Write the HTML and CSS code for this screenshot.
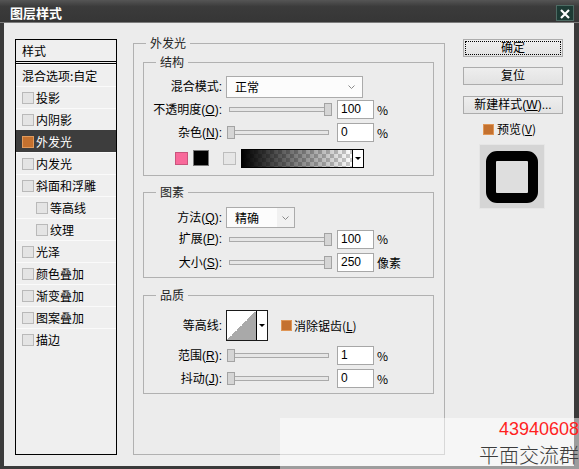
FILE: index.html
```html
<!DOCTYPE html>
<html lang="zh-CN">
<head>
<meta charset="utf-8">
<title>图层样式</title>
<link rel="stylesheet" href="styles.css">
</head>
<body>
<div class="window">
  <div class="titlebar">
    <span class="title">图层样式</span>
    <span class="close"><svg width="18" height="16" viewBox="0 0 18 16"><path d="M4.5 3.5 L13.5 12.5 M13.5 3.5 L4.5 12.5" stroke="#fff" stroke-width="2.4" fill="none"/></svg></span>
  </div>
  <div class="body">
    <div class="stylelist">
      <div class="list-head">样式</div>
      <div class="list-row">混合选项:自定</div>
      <div class="list-row"><span class="cb"></span>投影</div>
      <div class="list-row"><span class="cb"></span>内阴影</div>
      <div class="list-row selected"><span class="cb on"></span>外发光</div>
      <div class="list-row"><span class="cb"></span>内发光</div>
      <div class="list-row"><span class="cb"></span>斜面和浮雕</div>
      <div class="list-row sub"><span class="cb"></span>等高线</div>
      <div class="list-row sub"><span class="cb"></span>纹理</div>
      <div class="list-row"><span class="cb"></span>光泽</div>
      <div class="list-row"><span class="cb"></span>颜色叠加</div>
      <div class="list-row"><span class="cb"></span>渐变叠加</div>
      <div class="list-row"><span class="cb"></span>图案叠加</div>
      <div class="list-row"><span class="cb"></span>描边</div>
    </div>

    <fieldset class="outer">
      <legend>外发光</legend>

      <fieldset class="group g-struct">
        <legend>结构</legend>
        <div class="row r-first">
          <span class="lbl">混合模式:</span>
          <div class="select w-blend"><span>正常</span><span class="chev"><svg width="7" height="4" viewBox="0 0 7 4"><path d="M0.5 0.5 L3.5 3.5 L6.5 0.5" stroke="#8a8a8a" fill="none"/></svg></span></div>
        </div>
        <div class="row r-slider">
          <span class="lbl">不透明度(<u>O</u>):</span>
          <div class="slider"><div class="track"></div><div class="thumb max"></div></div>
          <div class="num">100</div><span class="unit">%</span>
        </div>
        <div class="row r-slider">
          <span class="lbl">杂色(<u>N</u>):</span>
          <div class="slider"><div class="track"></div><div class="thumb min"></div></div>
          <div class="num">0</div><span class="unit">%</span>
        </div>
        <div class="row r-colors">
          <span class="sw-pink"></span>
          <span class="sw-black"></span>
          <span class="sw-grey"></span>
          <div class="grad"><div class="grad-fill"></div><div class="drop-arrow"><span class="tri"></span></div></div>
        </div>
      </fieldset>

      <fieldset class="group g-elem">
        <legend>图素</legend>
        <div class="row r-method">
          <span class="lbl">方法(<u>Q</u>):</span>
          <div class="select w-method"><span class="sel-text">精确</span><span class="chev split"><svg width="7" height="4" viewBox="0 0 7 4"><path d="M0.5 0.5 L3.5 3.5 L6.5 0.5" stroke="#8a8a8a" fill="none"/></svg></span></div>
        </div>
        <div class="row r-slider">
          <span class="lbl">扩展(<u>P</u>):</span>
          <div class="slider"><div class="track"></div><div class="thumb max"></div></div>
          <div class="num">100</div><span class="unit">%</span>
        </div>
        <div class="row r-slider r-gap1">
          <span class="lbl">大小(<u>S</u>):</span>
          <div class="slider"><div class="track"></div><div class="thumb max"></div></div>
          <div class="num">250</div><span class="unit">像素</span>
        </div>
      </fieldset>

      <fieldset class="group g-quality">
        <legend>品质</legend>
        <div class="row r-contour">
          <span class="lbl">等高线:</span>
          <div class="contour"><div class="contour-img"></div><div class="drop-arrow"><span class="tri"></span></div></div>
          <span class="cb-orange"></span><span class="cb-label">消除锯齿(<u>L</u>)</span>
        </div>
        <div class="row r-slider r-gap3">
          <span class="lbl">范围(<u>R</u>):</span>
          <div class="slider"><div class="track"></div><div class="thumb min"></div></div>
          <div class="num">1</div><span class="unit">%</span>
        </div>
        <div class="row r-slider">
          <span class="lbl">抖动(<u>J</u>):</span>
          <div class="slider"><div class="track"></div><div class="thumb min"></div></div>
          <div class="num">0</div><span class="unit">%</span>
        </div>
      </fieldset>
    </fieldset>

    <div class="side">
      <div class="btn default"><span>确定</span></div>
      <div class="btn b2">复位</div>
      <div class="btn b3">新建样式(<u>W</u>)...</div>
      <div class="preview-check"><span class="cb-orange small"></span><span>预览(<u>V</u>)</span></div>
      <div class="preview"><div class="preview-shape"></div></div>
    </div>
  </div>

  <div class="watermark">
    <div class="wm-num">43940608</div>
    <div class="wm-cn">平面交流群</div>
  </div>
</div>
</body>
</html>
```

FILE: styles.css
```css
* { box-sizing: border-box; }

html, body {
  margin: 0;
  padding: 0;
}

body {
  width: 579px;
  height: 469px;
  overflow: hidden;
  background: #343434;
  font-family: "Liberation Sans", "Noto Sans CJK SC", sans-serif;
  font-size: 12px;
  line-height: 14px;
  color: #000;
}

.window {
  position: relative;
  width: 579px;
  height: 469px;
  display: flex;
  flex-direction: column;
  background: #3a3a3a;
  overflow: hidden;
}

/* ---------- title bar ---------- */
.titlebar {
  height: 23px;
  flex-shrink: 0;
  display: flex;
  align-items: center;
  justify-content: space-between;
  padding: 4px 5px 0 10px;
  background: linear-gradient(#555555, #3b3b3b 30%, #363636);
  border-bottom: 1px solid #7c7c7c;
}

.title {
  color: #fff;
  font-family: "Noto Sans CJK SC", sans-serif;
  font-weight: bold;
  font-size: 13px;
}

.close {
  width: 18px;
  height: 16px;
  display: flex;
  background: #1d3a34;
  border: 1px solid #4d6a63;
}

/* ---------- dialog body ---------- */
.body {
  flex: 1;
  margin: 0 5px 3px 4px;
  padding: 13px 0 0 11px;
  background: #ececec;
  display: flex;
  align-items: flex-start;
}

/* ---------- styles list ---------- */
.stylelist {
  width: 102px;
  height: 416px;
  margin-top: 3px;
  border: 1px solid #000;
  background: #efefef;
  flex-shrink: 0;
  font-family: "Noto Sans CJK SC", sans-serif;
}

.list-head {
  height: 24px;
  line-height: 22px;
  padding-left: 6px;
  border-bottom: 3px double #000;
}

.list-row {
  height: 22px;
  display: flex;
  align-items: center;
  padding-left: 6px;
  border-top: 1px solid #fafafa;
}

.list-row.sub { padding-left: 20px; }

.list-row.selected {
  background: #3d3d3d;
  color: #fff;
  border-top-color: #3d3d3d;
}

.cb {
  width: 12px;
  height: 12px;
  margin-right: 2px;
  border: 1px solid #b9b9b9;
  background: #e4e4e4;
  flex-shrink: 0;
}

.cb.on {
  background: #c4712f;
  border-color: #e19a5c;
}

/* ---------- group boxes ---------- */
fieldset {
  margin: 0;
  min-width: 0;
}

legend {
  line-height: 14px;
  height: 14px;
  padding: 0 4px;
  color: #222;
  font-family: "Noto Sans CJK SC", sans-serif;
}

.outer {
  width: 312px;
  height: 419px;
  margin-left: 16px;
  border: 1px solid #b1b1b1;
  padding: 0 10px 0 9px;
  flex-shrink: 0;
}

.outer > legend { margin-left: 3px; }

.group {
  width: 291px;
  border: 1px solid #b1b1b1;
  padding: 0;
}

.group > legend { margin-left: 12px; }

.g-struct { margin-top: 5px; padding-bottom: 6px; }
.g-elem { margin-top: 9px; padding-bottom: 3px; }
.g-quality { margin-top: 10px; padding-bottom: 3px; }

/* ---------- rows ---------- */
.row {
  display: flex;
  align-items: center;
}

.lbl {
  width: 78px;
  flex-shrink: 0;
  text-align: right;
  white-space: nowrap;
}

.r-first { margin-top: 7px; height: 22px; }
.r-slider { height: 23px; }
.r-gap1 { margin-top: 1px; }
.r-gap3 { margin-top: 3px; }
.r-colors { margin-top: 3px; height: 22px; }
.r-method { margin-top: 8px; height: 21px; }
.r-method + .r-slider { height: 22px; }
.r-contour { margin-top: 8px; height: 31px; }

/* dropdown */
.select {
  margin-left: 4px;
  height: 100%;
  border: 1px solid #ababab;
  background: #fcfcfc;
  display: flex;
  align-items: center;
  justify-content: space-between;
  padding-left: 8px;
  font-family: "Noto Sans CJK SC", sans-serif;
}

.w-blend { width: 137px; padding-right: 7px; }

.w-method { width: 69px; padding-right: 0; }

.chev { display: flex; align-items: center; }

.chev.split {
  width: 17px;
  height: 100%;
  justify-content: center;
  background: #f1f1f1;
}

/* slider */
.slider {
  position: relative;
  width: 105px;
  height: 13px;
  margin-left: 5px;
  display: flex;
  align-items: center;
  padding: 0 3px 0 2px;
}

.track {
  flex: 1;
  height: 5px;
  border: 1px solid #aaaaaa;
  background: #e6e6e6;
}

.thumb {
  position: absolute;
  top: 0;
  width: 8px;
  height: 13px;
  background: #d5d5d5;
  border: 1px solid #a3a3a3;
}

.thumb.max { right: 0; }
.thumb.min { left: 0; }

.num {
  width: 37px;
  height: 19px;
  margin-left: 5px;
  border: 1px solid #a7a7a7;
  background: #fff;
  padding-left: 3px;
  line-height: 17px;
}

.unit {
  margin-left: 3px;
  font-family: "Noto Sans CJK SC", sans-serif;
}

/* color row */
.sw-pink {
  width: 13px;
  height: 13px;
  margin-left: 31px;
  background: #f8699a;
  border: 1px solid #c9547c;
}

.sw-black {
  width: 16px;
  height: 16px;
  margin-left: 5px;
  background: #000;
  border: 1px solid #777;
}

.sw-grey {
  width: 13px;
  height: 13px;
  margin-left: 14px;
  background: #e6e6e6;
  border: 1px solid #bdbdbd;
}

.grad {
  width: 123px;
  height: 19px;
  margin-left: 5px;
  border: 1px solid #000;
  display: flex;
}

.grad-fill {
  flex: 1;
  background:
    linear-gradient(to right, #000, rgba(0, 0, 0, 0)),
    repeating-conic-gradient(#cccccc 0 25%, #ffffff 0 50%) 0 0 / 8px 8px;
}

.drop-arrow {
  width: 11px;
  border-left: 1px solid #000;
  background: #fff;
  display: flex;
  align-items: center;
  justify-content: center;
}

.tri {
  width: 0;
  height: 0;
  border-left: 3px solid transparent;
  border-right: 3px solid transparent;
  border-top: 3px solid #000;
}

/* contour */
.contour {
  width: 42px;
  height: 31px;
  margin-left: 4px;
  border: 1px solid #1a1a1a;
  display: flex;
}

.contour-img {
  flex: 1;
  background: linear-gradient(to top left, #a9a9a9 50%, #ffffff 50%);
}

.cb-orange {
  width: 11px;
  height: 11px;
  margin-left: 13px;
  background: #c4712f;
  border: 1px solid #df9656;
  flex-shrink: 0;
}

.cb-label {
  margin-left: 2px;
  font-family: "Noto Sans CJK SC", sans-serif;
}

/* ---------- right column ---------- */
.side {
  width: 100px;
  margin-left: 18px;
  margin-top: 3px;
  display: flex;
  flex-direction: column;
  flex-shrink: 0;
}

.btn {
  height: 18px;
  border: 1px solid #acacac;
  background: linear-gradient(#eeeeee, #e2e2e2);
  display: flex;
  align-items: center;
  justify-content: center;
  line-height: 14px;
}

.btn.default {
  outline: 1px dotted #000;
  outline-offset: -3px;
}

.b2 { margin-top: 10px; }
.b3 { margin-top: 11px; }

.preview-check {
  margin-top: 8px;
  height: 14px;
  padding-left: 20px;
  display: flex;
  align-items: center;
  font-family: "Noto Sans CJK SC", sans-serif;
}

.cb-orange.small {
  margin-left: 0;
  margin-right: 3px;
}

.preview {
  width: 66px;
  height: 65px;
  margin-top: 8px;
  margin-left: 16px;
  background: #d5d5d5;
  border: 1px solid #e6e6e6;
  display: flex;
  align-items: center;
  justify-content: center;
}

.preview-shape {
  width: 52px;
  height: 52px;
  border: 10px solid #000;
  border-radius: 11px;
  background: #dedede;
}

/* ---------- watermark overlay ---------- */
.watermark {
  position: absolute;
  left: 280px;
  top: 418px;
  right: 0;
  bottom: 0;
  padding-top: 1px;
  background: rgba(255, 255, 255, 0.5);
  text-align: right;
}

.wm-num {
  font-size: 18px;
  line-height: 21px;
  color: #ff1f1f;
}

.wm-cn {
  font-family: "Noto Sans CJK SC", sans-serif;
  font-weight: 300;
  font-size: 20px;
  line-height: 29px;
  color: #3c3c3c;
}
```
